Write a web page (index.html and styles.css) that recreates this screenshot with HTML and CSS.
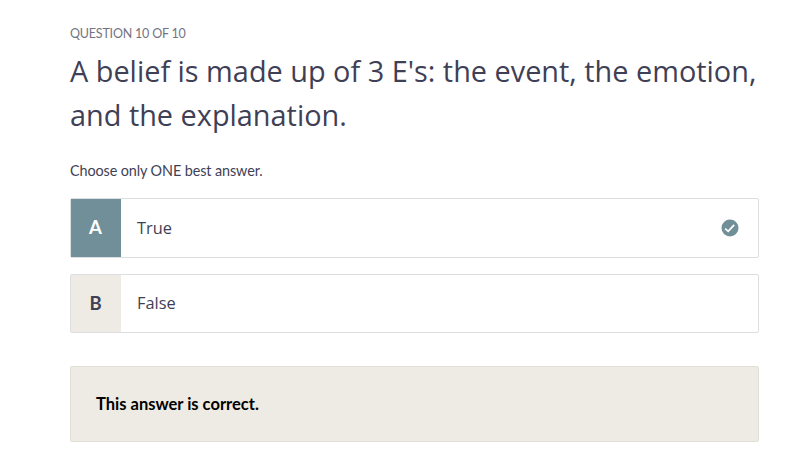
FILE: index.html
```html
<!DOCTYPE html>
<html lang="en">
<head>
    <meta charset="utf-8">
    <title>Question 10 of 10</title>
    <link rel="stylesheet" href="styles.css">
</head>
<body>
<div class="quiz">
    <div class="counter">QUESTION 10 OF 10</div>
    <h1>A belief is made up of 3 E's: the event, the emotion,<br>and the explanation.</h1>
    <p class="hint">Choose only ONE best answer.</p>

    <div class="answer selected">
        <div class="letter">A</div>
        <div class="text">True</div>
        <svg class="check" width="18" height="18" viewBox="0 0 18 18">
            <circle cx="9" cy="9" r="8.5" fill="#708f98"/>
            <path d="M4.2 9.6l3 2.7 6-6.5" fill="none" stroke="#fff" stroke-width="1.8"/>
        </svg>
    </div>
    <div class="answer">
        <div class="letter">B</div>
        <div class="text">False</div>
    </div>

    <div class="result">This answer is correct.</div>
</div>
</body>
</html>
```

FILE: styles.css
```css
* {
    box-sizing: border-box;
}

body {
    margin: 0;
    background-color: #fff;
    color: #3f3f56;
    font-family: Lato, sans-serif;
}

.quiz {
    width: 689px;
    margin-left: 70px;
    padding-top: 26px;
}

.counter {
    font-size: 12.5px;
    line-height: 16px;
    letter-spacing: -0.2px;
    color: #74747f;
}

h1 {
    margin: 7px 0 0;
    font-family: "Open Sans", sans-serif;
    font-size: 28.87px;
    font-weight: 400;
    line-height: 44px;
    white-space: nowrap;
}

.hint {
    margin: 24px 0 17px;
    font-size: 14.4px;
    line-height: 20px;
    letter-spacing: -0.1px;
}

.answer {
    display: flex;
    align-items: center;
    height: 60px;
    margin-bottom: 16px;
    border: 1px solid #dddee1;
    border-radius: 2px;
}

.answer + .answer {
    height: 59px;
}

.letter {
    display: flex;
    align-items: center;
    justify-content: center;
    width: 50px;
    height: 100%;
    padding: 0 1px 2px 0;
    background-color: #eeebe4;
    font-size: 18.5px;
    font-weight: bold;
}

.selected .letter {
    background-color: #708f98;
    color: #fff;
}

.text {
    flex: 1;
    padding: 0 0 2px 16px;
    font-family: "Open Sans", sans-serif;
    font-size: 16.4px;
}

.check {
    margin-right: 19.5px;
}

.result {
    height: 76px;
    margin-top: 33px;
    padding-left: 25px;
    border: 1px solid #e2dfd8;
    border-radius: 2px;
    background-color: #eeebe4;
    color: #000;
    font-size: 16.5px;
    font-weight: bold;
    line-height: 74px;
}
```
